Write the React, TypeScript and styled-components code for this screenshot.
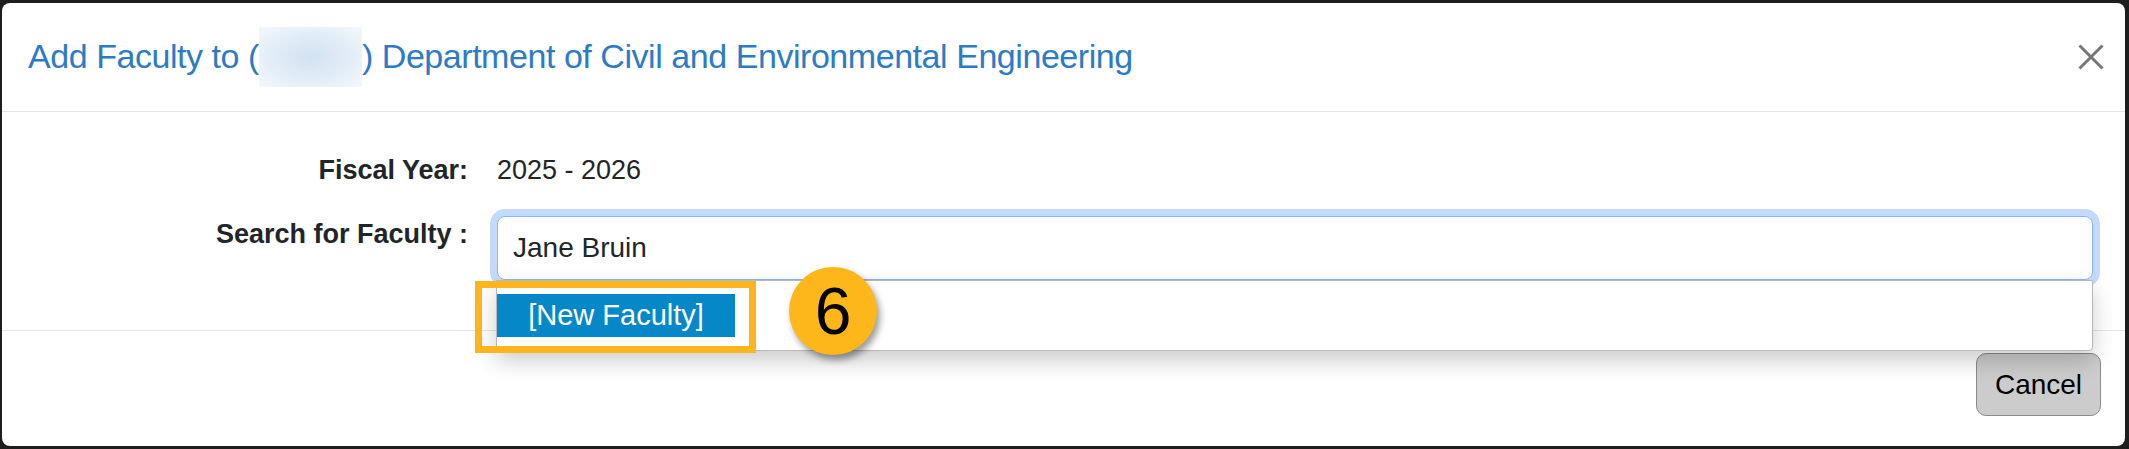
import React from "react";
import styled, { createGlobalStyle } from "styled-components";

const GlobalStyle = createGlobalStyle`
  html, body {
    margin: 0;
    padding: 0;
    background: #1e1e1e;
  }
  body {
    font-family: "Liberation Sans", Arial, sans-serif;
  }
`;

const Frame = styled.div`
  box-sizing: border-box;
  height: 449px;
  padding: 3px 4px 3px 2px;
`;

const Modal = styled.div`
  height: 100%;
  background: #fff;
  border-radius: 8px;
  display: flex;
  flex-direction: column;
  overflow: hidden;
`;

const Header = styled.div`
  flex: none;
  height: 108px;
  display: flex;
  align-items: center;
  justify-content: space-between;
  padding: 0 21px 0 26px;
  border-bottom: 1px solid #e5e5e5;
`;

const Title = styled.h4`
  margin: 0;
  font-size: 34px;
  letter-spacing: -0.45px;
  font-weight: normal;
  color: #2d7bc5;
  white-space: nowrap;
`;

const Blurred = styled.span`
  display: inline-block;
  width: 103px;
  height: 60px;
  vertical-align: middle;
  margin: -14px 0 -10px;
  background: radial-gradient(ellipse at center, #d2e2f1 0%, #e3edf7 55%, #f4f8fc 100%);
`;

const Close = styled.button`
  border: 0;
  padding: 0;
  background: transparent;
  width: 26px;
  height: 26px;
  display: flex;
`;

const Body = styled.div`
  flex: none;
  padding: 40px 32px 50px 0;
  display: grid;
  grid-template-columns: 466px 1fr;
  column-gap: 29px;
  row-gap: 28px;
  border-bottom: 1px solid #e5e5e5;
`;

const Label = styled.div`
  text-align: right;
  font-weight: bold;
  font-size: 27px;
  line-height: 36px;
  color: #212529;
`;

const Value = styled.div`
  font-size: 27px;
  line-height: 36px;
  color: #212529;
`;

const Field = styled.div`
  position: relative;
`;

const Input = styled.input`
  box-sizing: border-box;
  display: block;
  width: 100%;
  height: 64px;
  padding: 0 15px;
  font-family: inherit;
  font-size: 28px;
  color: #212529;
  border: 1px solid #86b7fe;
  border-radius: 8px;
  box-shadow: 0 0 0 7px #c3dafe;
  outline: none;
  background: #fff;
`;

const Menu = styled.ul`
  position: absolute;
  z-index: 5;
  top: 64px;
  left: -1px;
  right: 0;
  box-sizing: border-box;
  height: 71px;
  margin: 0;
  padding: 13px 0 0;
  list-style: none;
  background: #fff;
  border: 1px solid #b8b8b8;
  border-radius: 0 0 4px 4px;
  box-shadow: 0 10px 22px rgba(0, 0, 0, 0.2);
`;

const MenuItem = styled.li<{ $active?: boolean }>`
  display: inline-block;
  width: 238px;
  height: 43px;
  line-height: 43px;
  text-align: center;
  font-size: 29px;
  color: ${(p) => (p.$active ? "#fff" : "#212529")};
  background: ${(p) => (p.$active ? "#0688c8" : "transparent")};
`;

const Highlight = styled.div`
  position: absolute;
  z-index: 6;
  top: 65px;
  left: -22px;
  width: 281px;
  height: 72px;
  box-sizing: border-box;
  border: 7px solid #fcb51d;
`;

const Badge = styled.div`
  position: absolute;
  z-index: 7;
  top: 51px;
  left: 292px;
  width: 88px;
  height: 88px;
  border-radius: 50%;
  background: #fdb71b;
  box-shadow: 3px 5px 7px rgba(0, 0, 0, 0.4);
  display: flex;
  align-items: center;
  justify-content: center;
  font-size: 66px;
  color: #000;
`;

const Footer = styled.div`
  display: flex;
  justify-content: flex-end;
  padding: 22px 24px;
`;

const Button = styled.button`
  width: 125px;
  height: 63px;
  font-family: inherit;
  font-size: 28px;
  color: #000;
  background: #cccccc;
  border: 1px solid #8a8a8a;
  border-radius: 10px;
`;

export default function App() {
  return (
    <>
      <GlobalStyle />
      <Frame>
        <Modal>
          <Header>
            <Title>
              Add Faculty to (<Blurred />) Department of Civil and Environmental
              Engineering
            </Title>
            <Close aria-label="Close">
              <svg width="26" height="26" viewBox="0 0 26 26">
                <path
                  d="M1.5 1.5 L24.5 24.5 M24.5 1.5 L1.5 24.5"
                  stroke="#777"
                  strokeWidth="3"
                  fill="none"
                />
              </svg>
            </Close>
          </Header>

          <Body>
            <Label>Fiscal Year:</Label>
            <Value>2025 - 2026</Value>

            <Label>Search for Faculty :</Label>
            <Field>
              <Input value="Jane Bruin" readOnly />
              <Menu>
                <MenuItem $active>[New Faculty]</MenuItem>
              </Menu>
              <Highlight />
              <Badge>6</Badge>
            </Field>
          </Body>

          <Footer>
            <Button>Cancel</Button>
          </Footer>
        </Modal>
      </Frame>
    </>
  );
}
